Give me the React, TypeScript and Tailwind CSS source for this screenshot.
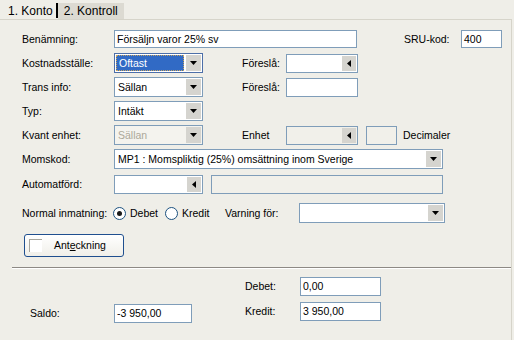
import React from 'react';

const DownArrow = () => (
  <svg width="7" height="4" viewBox="0 0 7 4">
    <path d="M0 0h7L3.5 4z" fill="#000" />
  </svg>
);

const LeftArrow = () => (
  <svg width="4" height="7" viewBox="0 0 4 7">
    <path d="M4 0v7L0 3.5z" fill="#000" />
  </svg>
);

interface BoxProps {
  className: string;
  children?: React.ReactNode;
}

const Combo: React.FC<BoxProps & { disabled?: boolean }> = ({ className, children, disabled }) => (
  <div className={`flex h-[20px] border border-[#7f9db9] p-px ${disabled ? 'bg-[#f4f3ee]' : 'bg-white'} ${className}`}>
    <div className={`flex-1 flex items-center overflow-hidden whitespace-nowrap ${disabled ? 'text-[#aca899]' : ''}`}>
      {children}
    </div>
    <div className="w-[15px] bg-[#d5d4cf] flex items-center justify-center">
      <DownArrow />
    </div>
  </div>
);

const Lookup: React.FC<BoxProps & { disabled?: boolean }> = ({ className, disabled }) => (
  <div className={`flex h-[19px] border border-[#7f9db9] p-px ${disabled ? 'bg-[#f1f0ea]' : 'bg-white'} ${className}`}>
    <div className="flex-1" />
    <div className="w-[14px] bg-[#d5d4cf] flex items-center justify-center">
      <LeftArrow />
    </div>
  </div>
);

const TextBox: React.FC<BoxProps & { disabled?: boolean }> = ({ className, children, disabled }) => (
  <div className={`flex items-center h-[18px] border border-[#7f9db9] px-[2px] whitespace-nowrap ${disabled ? 'bg-[#f1f0ea]' : 'bg-white'} ${className}`}>
    {children}
  </div>
);

const Label: React.FC<BoxProps> = ({ className, children }) => (
  <div className={`shrink-0 whitespace-nowrap ${className}`}>{children}</div>
);

const Radio: React.FC<{ checked?: boolean }> = ({ checked }) => (
  <div className="w-[13px] h-[13px] rounded-full border border-[#1c5180] bg-white flex items-center justify-center">
    {checked && <div className="w-[5px] h-[5px] rounded-full bg-[#1a1a1a]" />}
  </div>
);

export default function App() {
  return (
    <div className="w-[514px] h-[340px] bg-[#efeee8] overflow-hidden text-[10.5px] leading-none text-black font-['Liberation_Sans',Arial,sans-serif]">
      {/* tabs */}
      <div className="flex items-end h-[19px] pl-[2px] text-[12px]">
        <div className="h-[16px] pl-[6px] pr-[3px] flex items-center">1. Konto</div>
        <div className="w-[2px] h-[15px] bg-black mb-px" />
        <div className="h-[16px] pl-[6px] pr-[6px] flex items-center bg-[#dcdad2]">2. Kontroll</div>
      </div>

      <div className="h-[321px] border-t border-r border-[#d6d4ca] mr-[2px]">
        <div className="pl-[22px]">
          {/* Benämning */}
          <div className="flex items-center h-[20px] mt-[9px]">
            <Label className="w-[92px]">Benämning:</Label>
            <TextBox className="w-[243px]">Försäljn varor 25% sv</TextBox>
            <Label className="ml-[47px] w-[57px]">SRU-kod:</Label>
            <TextBox className="w-[41px]">400</TextBox>
          </div>

          {/* Kostnadsställe */}
          <div className="flex items-center h-[20px] mt-[4px]">
            <Label className="w-[92px]">Kostnadsställe:</Label>
            <div className="flex h-[20px] w-[89px] border border-[#4d6fa8] bg-white p-px">
              <div className="flex-1 flex items-center bg-[#316ac5] text-white pl-[2px] border border-dotted border-[#c9a45e] mr-[2px]">
                Oftast
              </div>
              <div className="w-[15px] bg-[#d5d4cf] flex items-center justify-center">
                <DownArrow />
              </div>
            </div>
            <Label className="ml-[39px] w-[44px]">Föreslå:</Label>
            <Lookup className="w-[72px]" />
          </div>

          {/* Trans info */}
          <div className="flex items-center h-[20px] mt-[4px]">
            <Label className="w-[92px]">Trans info:</Label>
            <Combo className="w-[89px]"><span className="pl-[2px]">Sällan</span></Combo>
            <Label className="ml-[39px] w-[44px]">Föreslå:</Label>
            <TextBox className="w-[72px] h-[19px]" />
          </div>

          {/* Typ */}
          <div className="flex items-center h-[20px] mt-[4px]">
            <Label className="w-[92px]">Typ:</Label>
            <Combo className="w-[89px]"><span className="pl-[2px]">Intäkt</span></Combo>
          </div>

          {/* Kvant enhet */}
          <div className="flex items-center h-[20px] mt-[4px]">
            <Label className="w-[92px]">Kvant enhet:</Label>
            <Combo className="w-[89px]" disabled><span className="pl-[2px]">Sällan</span></Combo>
            <Label className="ml-[39px] w-[44px]">Enhet</Label>
            <Lookup className="w-[72px]" disabled />
            <TextBox className="ml-[8px] w-[31px] h-[19px]" disabled />
            <Label className="ml-[6px]">Decimaler</Label>
          </div>

          {/* Momskod */}
          <div className="flex items-center h-[20px] mt-[4px]">
            <Label className="w-[92px]">Momskod:</Label>
            <Combo className="w-[329px]">
              <span className="pl-[2px]">MP1 : Momspliktig (25%) omsättning inom Sverige</span>
            </Combo>
          </div>

          {/* Automatförd */}
          <div className="flex items-center h-[20px] mt-[5px]">
            <Label className="w-[92px]">Automatförd:</Label>
            <Lookup className="w-[89px]" />
            <TextBox className="ml-[8px] w-[232px] h-[19px]" disabled />
          </div>

          {/* Normal inmatning */}
          <div className="flex items-center h-[20px] mt-[9px]">
            <Label className="w-[91px]">Normal inmatning:</Label>
            <Radio checked />
            <Label className="ml-[4px] w-[35px]">Debet</Label>
            <Radio />
            <Label className="ml-[4px] w-[43px]">Kredit</Label>
            <Label className="w-[74px]">Varning för:</Label>
            <Combo className="w-[146px]" />
          </div>

          {/* Anteckning */}
          <div className="mt-[11px] ml-[2px] w-[100px] h-[23px] rounded-[3px] border border-[#1f4f8f] bg-gradient-to-b from-white to-[#f0efe9] flex items-center">
            <div className="ml-[4px] w-[13px] h-[13px] border-t border-l border-[#a7a69e] bg-white" />
            <span className="ml-[12px]">
              Ant<span className="underline">e</span>ckning
            </span>
          </div>
        </div>

        {/* separator */}
        <div className="mt-[10px] ml-[12px] h-[2px] bg-[#8d8984] border-b border-white" />

        {/* totals */}
        <div className="flex pl-[30px] mt-[8px]">
          <div className="flex items-center h-[19px] mt-[27px]">
            <Label className="w-[84px]">Saldo:</Label>
            <TextBox className="w-[78px] h-[19px] bg-[#f1f0ea]">-3 950,00</TextBox>
          </div>
          <div className="ml-[53px] flex flex-col gap-[6px]">
            <div className="flex items-center h-[19px]">
              <Label className="w-[55px]">Debet:</Label>
              <TextBox className="w-[81px] h-[19px]">0,00</TextBox>
            </div>
            <div className="flex items-center h-[19px]">
              <Label className="w-[55px]">Kredit:</Label>
              <TextBox className="w-[81px] h-[19px]">3 950,00</TextBox>
            </div>
          </div>
        </div>
      </div>
    </div>
  );
}
